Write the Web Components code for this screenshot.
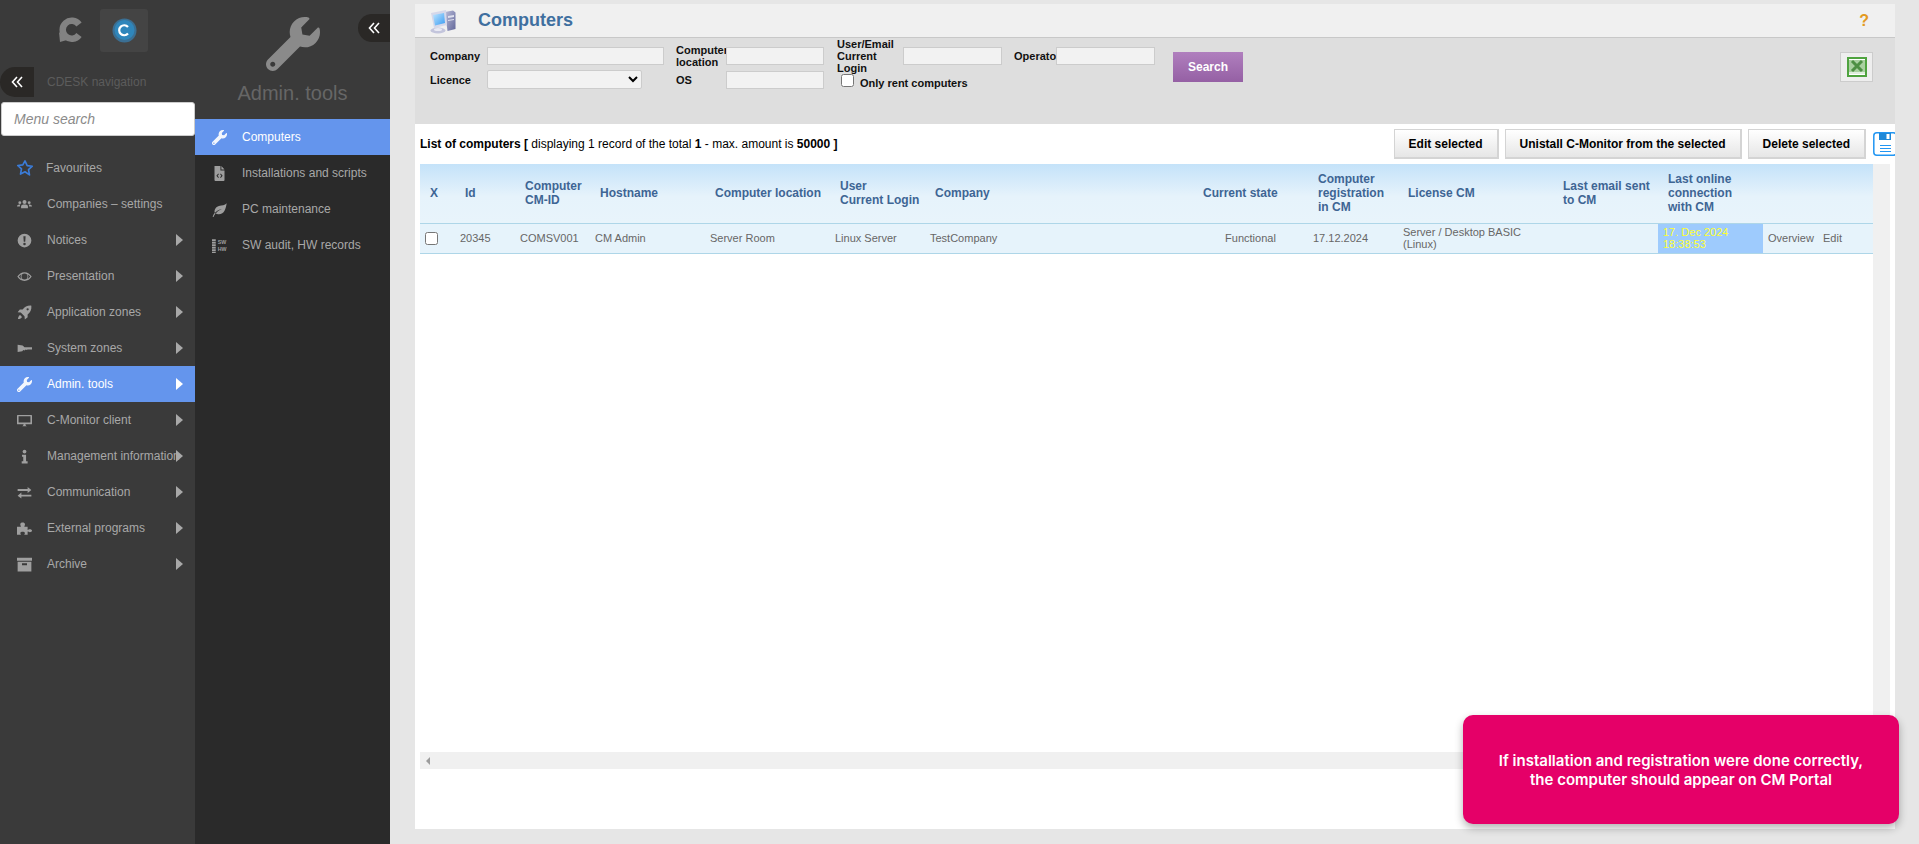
<!DOCTYPE html>
<html>
<head>
<meta charset="utf-8">
<title>Computers</title>
<style>
    html, body { margin: 0; height: 100%; overflow: hidden; background: #e6e6e6; }
    body { font-family: "Liberation Sans", Arial, sans-serif; }
</style>
</head>
<body>
<app-shell></app-shell>

<script>
const WRENCH = 'M507.73 109.1c-2.24-9.03-13.54-12.09-20.12-5.51l-74.36 74.36-67.88-11.31-11.31-67.88 74.36-74.36c6.62-6.62 3.43-17.9-5.66-20.16-47.38-11.74-99.55.91-136.58 37.93-39.64 39.64-50.55 97.1-34.05 147.2L18.74 402.76c-24.99 24.99-24.99 65.51 0 90.5 24.99 24.99 65.51 24.99 90.5 0l213.21-213.21c50.12 16.71 107.47 5.68 147.37-34.22 37.07-37.07 49.7-89.32 37.91-136.73zM64 472c-13.25 0-24-10.75-24-24 0-13.26 10.75-24 24-24s24 10.74 24 24c0 13.25-10.75 24-24 24z'

const ICONS = {
    star: '<path d="M12 2.5l2.9 6.3 6.8.8-5 4.7 1.3 6.8L12 17l-6 3.1 1.3-6.8-5-4.7 6.8-.8z" fill="none" stroke="#3b82e6" stroke-width="2.2" stroke-linejoin="round"/>',
    users: '<circle cx="12" cy="8" r="3.2"/><circle cx="4.5" cy="9" r="2.3"/><circle cx="19.5" cy="9" r="2.3"/><path d="M6.5 18v-3c0-2 2-3 5.5-3s5.5 1 5.500 3v3z"/><path d="M0 15c0-2 2-3.500 5.500-3-.6.8-.9 1.700-.9 3H0zM24 15c0-2-2-3.500-5.500-3 .6.8.9 1.700.9 3H24z"/>',
    notice: '<path fill-rule="evenodd" d="M12 1a11 11 0 1 0 0 22 11 11 0 0 0 0-22zM10.200 5h3.600l-.6 9h-2.400zM12 15.500a2 2 0 1 1 0 4 2 2 0 0 1 0-4z"/>',
    eye: '<path fill-rule="evenodd" d="M12 5C7 5 3 8 .5 12 3 16 7 19 12 19s9-3 11.500-7C21 8 17 5 12 5zm0 2.200a4.800 4.800 0 1 1 0 9.600 4.800 4.800 0 0 1 0-9.600zM2.800 12c1.300-1.800 2.900-3.200 4.800-4.200a6.500 6.500 0 0 0 0 8.400c-1.900-1-3.500-2.400-4.800-4.200zm18.400 0c-1.300 1.800-2.900 3.200-4.800 4.200a6.500 6.500 0 0 0 0-8.400c1.900 1 3.500 2.400 4.800 4.200z"/>',
    rocket: '<path d="M23 1c-6-.5-10.500 1.500-14 6H4.500L1 11.500l5 .5 6 6 .5 5 4.500-3.500V15c4.500-3.500 6.500-8 6-14zM17 5.200a1.800 1.800 0 1 1 0 3.600 1.800 1.800 0 0 1 0-3.600zM5 16c-2 .8-3 3-3.500 6.500C5 22 7.200 21 8 19z"/>',
    key: '<path d="M1 6l8 1 3 3h12v3.500h-7l-1.500 1-1.500-1-2 1.500-2-.5-1.500 2-7.500 1z"/>',
    desktop: '<path fill-rule="evenodd" d="M1 3h22a1 1 0 0 1 1 1v13a1 1 0 0 1-1 1H1a1 1 0 0 1-1-1V4a1 1 0 0 1 1-1zm1.500 2v10h19V5zM8 21c1.500-.4 2.500-1.200 2.500-3h3c0 1.800 1 2.600 2.500 3z"/>',
    info: '<circle cx="12" cy="4" r="3"/><path d="M8 9h6.500v10.500H17V23H7.500v-3.500H10V12.500H8z"/>',
    exchange: '<path d="M1 7.500h16V4l6 5-6 4.700V10.500H1zM23 16.500H7V13l-6 5 6 4.700V19.500h16z" transform="translate(0 -1)"/>',
    puzzle: '<path d="M0 9h6c1-.6-.8-1.500-.8-3.500C5.200 3.500 7 2.500 9 2.500s3.800 1 3.800 3c0 2-1.800 2.900-.8 3.500h5v5c.6 1 1.500-.8 3.500-.8 2 0 3.500 1 3.500 2.300s-1.500 2.300-3.500 2.300c-2 0-2.900-1.500-3.500-.8V22h-5c-1-.6.800-1.500.8-2.800 0-1.200-1.800-2.200-3.800-2.200s-3.800 1-3.800 2.200c0 1.300 1.800 2.200.8 2.800H0z"/>',
    archive: '<path fill-rule="evenodd" d="M0 1h24v5H0zM1 7.500h22V23H1zM8 10v3h8v-3z"/>',
    wrench: '<path transform="scale(.0469)" d="' + WRENCH + '"/>',
    filecode: '<path fill-rule="evenodd" d="M4 0h9.500v7H20v15.500a1.500 1.500 0 0 1-1.500 1.500h-13A1.500 1.500 0 0 1 4 22.500zM15 0l5 5.500h-5zM10 12l-3 3.500 3 3.500 1-1-2-2.500 2-2.500zM14 12l-1 1 2 2.500-2 2.500 1 1 3-3.500z"/>',
    leaf: '<path d="M23.500 2C22 11 20 20 10 19.500c-1.500 0-3-.5-4-1.300C9 14 13 12.500 16 11.500 12 12 7.500 13.500 4.500 17.500 3 13 6 8 11 6.500c5-1.500 9.500-1 12.500-4.500zM1 23.500c.8-2.500 2-4.500 3.500-6.200l1.200 1.100C4.200 20 3 22 2.500 24z"/>',
    audit: '<g><rect x="0" y="2" width="6" height="3"/><rect x="0" y="6" width="6" height="3"/><rect x="0" y="10" width="6" height="3"/><rect x="0" y="14" width="6" height="3"/><rect x="0" y="18" width="6" height="3"/><rect x="0" y="22" width="6" height="2"/><text x="9" y="10" font-size="8.500" font-weight="700" font-family="Liberation Sans, sans-serif">SW</text><text x="9" y="21" font-size="8.500" font-weight="700" font-family="Liberation Sans, sans-serif">HW</text></g>'
}

class NavItem extends HTMLElement {
    constructor() {
        super()
        const shadow = this.attachShadow({ mode: 'open' })
        shadow.innerHTML = `
      <style>
        :host {
          display: flex;
          align-items: center;
          position: relative;
          height: 36px;
          padding-left: var(--item-pad, 17px);
          color: #a8a8a8;
          font-size: 12px;
          white-space: nowrap;
        }
        :host([active]) { background: #6495ed; color: #fff; }
        svg { width: 15px; height: 15px; fill: currentColor; flex: none; opacity: .92; }
        :host([big]) svg { width: 18px; height: 18px; margin-left: -1px; }
        .label { margin-left: var(--label-gap, 15px); }
        :host([big]) .label { margin-left: 12px; }
        .arrow {
          display: none;
          position: absolute;
          right: 12px;
          top: 12px;
          border-left: 7px solid currentColor;
          border-top: 6px solid transparent;
          border-bottom: 6px solid transparent;
        }
        :host([arrow]) .arrow { display: block; }
      </style>
      <svg viewBox="0 0 24 24"></svg>
      <span class="label"><slot></slot></span>
      <span class="arrow"></span>
    `
    }

    connectedCallback() {
        this.shadowRoot.querySelector('svg').innerHTML = ICONS[this.getAttribute('icon')] || ''
    }
}

class CollapseTab extends HTMLElement {
    constructor() {
        super()
        const shadow = this.attachShadow({ mode: 'open' })
        shadow.innerHTML = `
      <style>
        :host {
          display: flex;
          align-items: center;
          justify-content: center;
          width: 34px;
          height: 30px;
          background: #2a2826;
          border-radius: 15px 0 0 15px;
        }
        svg { width: 12px; height: 12px; fill: none; stroke: #fff; stroke-width: 1.6; }
      </style>
      <svg viewBox="0 0 12 12"><path d="M6 1L1.500 6 6 11M11 1L6.500 6 11 11"/></svg>
    `
    }
}

class MainRail extends HTMLElement {
    constructor() {
        super()
        const shadow = this.attachShadow({ mode: 'open' })
        shadow.innerHTML = `
      <style>
        :host {
          display: block;
          width: 195px;
          flex: none;
          background: #3a3a3a;
        }
        .logos { display: flex; align-items: flex-start; height: 67px; padding: 9px 0 0 58px; box-sizing: border-box; }
        .logo-c { width: 25px; height: 26px; margin-top: 8px; }
        .tile {
          display: flex;
          align-items: center;
          justify-content: center;
          width: 48px;
          height: 43px;
          margin-left: 17px;
          background: #444;
          border-radius: 3px;
        }
        .tile svg { width: 25px; height: 25px; }
        .head { display: flex; align-items: center; height: 30px; }
        .head span { margin-left: 13px; font-size: 12px; color: #5c5c5c; }
        .search {
          box-sizing: border-box;
          height: 34px;
          margin: 5px 0 0 1px;
          padding-left: 12px;
          display: flex;
          align-items: center;
          background: #fff;
          border: 1px solid #ccc;
          border-radius: 3px;
          font-size: 14px;
          font-style: italic;
          color: #8b8b8b;
        }
        .list { margin-top: 14px; }
      </style>
      <div class="logos">
        <svg class="logo-c" viewBox="0 0 25 26">
          <path d="M21 7.500A9 9 0 1 0 21 18" fill="none" stroke="#828282" stroke-width="6.500"/>
          <path d="M1 15l1 10 7-2z" fill="#828282"/>
        </svg>
        <div class="tile">
          <svg viewBox="0 0 25 25">
            <circle cx="12.500" cy="12.500" r="12" fill="#3b6f93"/>
            <circle cx="12.500" cy="12" r="10" fill="#2f86bb"/>
            <path d="M16 9a5 5 0 1 0 0 6.500" fill="none" stroke="#fff" stroke-width="2.200"/>
          </svg>
        </div>
      </div>
      <div class="head"><collapse-tab></collapse-tab><span>CDESK navigation</span></div>
      <div class="search">Menu search</div>
      <div class="list"><slot></slot></div>
    `
    }
}

class SubRail extends HTMLElement {
    constructor() {
        super()
        const shadow = this.attachShadow({ mode: 'open' })
        shadow.innerHTML = `
      <style>
        :host {
          display: block;
          position: relative;
          width: 195px;
          flex: none;
          background: #2a2a2a;
          --item-pad: 17px;
          --label-gap: 15px;
        }
        .top {
          height: 119px;
          box-sizing: border-box;
          padding-top: 17px;
          background: #3a3a3a;
          text-align: center;
        }
        .top svg { display: block; width: 54px; height: 54px; margin: 0 auto 0 71px; fill: #8a8a8a; }
        .title { margin-top: 11px; padding-left: 0; font-size: 20px; line-height: 23px; color: #666; }
        collapse-tab { position: absolute; top: 14px; right: 0; width: 32px; height: 28px; }
      </style>
      <div class="top">
        <svg viewBox="0 0 512 512"><path d="${WRENCH}"/></svg>
        <div class="title"><slot name="title"></slot></div>
      </div>
      <collapse-tab></collapse-tab>
      <slot></slot>
    `
    }
}

class FilterBar extends HTMLElement {
    constructor() {
        super()
        const shadow = this.attachShadow({ mode: 'open' })
        shadow.innerHTML = `
      <style>
        :host {
          display: flex;
          align-items: flex-start;
          box-sizing: border-box;
          height: 86px;
          padding: 9px 22px 0 15px;
          background: #dedede;
          font-size: 11px;
          font-weight: bold;
          line-height: 12px;
          color: #111;
        }
        .grid {
          display: grid;
          grid-template-columns: 57px 177px 62px 98px 79px 99px 54px 99px;
          grid-template-rows: 18px 18px;
          row-gap: 6px;
          align-items: center;
        }
        .l2 { margin-left: 12px; }
        .l3 { margin-left: 13px; }
        .l4 { margin-left: 12px; }
        .c2 { grid-column: 3 / 4; }
        .l2 { width: 50px; }
        label { display: block; }
        input.text {
          box-sizing: border-box;
          width: 100%;
          height: 18px;
          margin: 0;
          background: #f2f2f2;
          border: 1px solid #ccc;
        }
        .c3 { margin-left: 12px; }
        select {
          box-sizing: border-box;
          width: 155px;
          height: 19px;
          margin: -1px 0 0;
          background: #f2f2f2;
          border: 1px solid #ccc;
          border-radius: 2px;
        }
        .rent { grid-column: 5 / 8; display: flex; align-items: center; margin-left: 13px; }
        .rent input { width: 13px; height: 13px; margin: 0 6px 0 4px; }
        .rent span { position: relative; top: 3px; }
        .rent span { transform: none; }
        .search {
          box-sizing: border-box;
          width: 70px;
          height: 30px;
          margin: 5px 0 0 18px;
          display: flex;
          align-items: center;
          justify-content: center;
          background: linear-gradient(#b07fbe, #9560a4);
          color: #fff;
          font-size: 12px;
        }
        .excel {
          box-sizing: border-box;
          width: 33px;
          height: 30px;
          margin: 5px 0 0 auto;
          display: flex;
          align-items: center;
          justify-content: center;
          background: #eee;
          border: 1px solid #ccc;
        }
        .excel svg { width: 20px; height: 20px; }
      </style>
      <div class="grid">
        <label>Company</label><input class="text">
        <label class="l2">Computer, location</label><input class="text">
        <label class="l3">User/Email Current Login</label><input class="text">
        <label class="l4">Operator</label><input class="text">
        <label>Licence</label><select><option></option></select>
        <label class="l2">OS</label><input class="text">
        <div class="rent"><input type="checkbox"><span>Only rent computers</span></div>
      </div>
      <div class="search">Search</div>
      <div class="excel">
        <svg viewBox="0 0 20 20">
          <rect x="1" y="1" width="18" height="18" fill="#fff" stroke="#4fa33f" stroke-width="2"/>
          <rect x="2" y="3" width="16" height="12" fill="#a9d0a0"/>
          <path d="M5 4l10 10M15 4L5 14" stroke="#4d8f43" stroke-width="3"/>
          <rect x="2" y="15" width="16" height="2" fill="#dfeedd"/>
        </svg>
      </div>
    `
    }
}

class ActionBar extends HTMLElement {
    constructor() {
        super()
        const shadow = this.attachShadow({ mode: 'open' })
        shadow.innerHTML = `
      <style>
        :host {
          display: flex;
          align-items: flex-start;
          box-sizing: border-box;
          height: 40px;
          padding: 5px 0 0 5px;
          background: #fff;
          color: #000;
          font-size: 12px;
        }
        .info { margin-top: 8px; line-height: 14px; flex: 1; white-space: nowrap; }
        .btn {
          box-sizing: border-box;
          height: 30px;
          margin-left: 6px;
          padding: 0 14px;
          display: flex;
          align-items: center;
          font-weight: bold;
          background: linear-gradient(#fff, #e6e6e6);
          border: 2px solid #d4d4d4;
          border-top-width: 1px;
          border-left-width: 1px;
        }
        svg { flex: none; width: 24px; height: 24px; margin: 3px -2px 0 7px; }
      </style>
      <div class="info"><b>List of computers [</b> displaying 1 record of the total <b>1</b> - max. amount is <b>50000 ]</b></div>
      <div class="btn">Edit selected</div>
      <div class="btn">Unistall C-Monitor from the selected</div>
      <div class="btn">Delete selected</div>
      <svg viewBox="0 0 24 24">
        <rect x=".8" y=".8" width="22.400" height="22.400" rx="3" fill="#fff" stroke="#2196f3" stroke-width="1.500"/>
        <rect x="6" y="1" width="12" height="7" fill="#1e88d8"/>
        <rect x="13.500" y="2" width="3" height="5" fill="#fff"/>
        <path d="M7 13.500h11M7 16.500h11M7 19.500h11" stroke="#2196f3" stroke-width="1.200"/>
      </svg>
    `
    }
}

class ComputerTable extends HTMLElement {
    constructor() {
        super()
        const shadow = this.attachShadow({ mode: 'open' })
        shadow.innerHTML = `
      <style>
        :host { display: block; flex: none; width: 1453px; }
        table { border-collapse: collapse; table-layout: fixed; width: 1453px; }
        th {
          height: 59px;
          padding: 0 0 0 10px;
          box-sizing: border-box;
          text-align: left;
          font-size: 12px;
          line-height: 14px;
          color: #3e6594;
          background: linear-gradient(#c4e2f9, #e6f3fb 55%, #e8f4fb);
          border-bottom: 1px solid #aed6e8;
        }
        td {
          height: 30px;
          padding: 0 0 0 5px;
          box-sizing: border-box;
          font-size: 11px;
          line-height: 12px;
          color: #666;
          background: #e6f3fb;
          border-bottom: 1px solid #aed6e8;
        }
        td.state { text-align: center; padding: 0; }
        td.online { background: #9ecbfd; color: #ffff33; }
        input { display: block; width: 13px; height: 13px; margin: 0; }
      </style>
      <table>
        <colgroup>
          <col style="width:35px"><col style="width:60px"><col style="width:75px"><col style="width:115px">
          <col style="width:125px"><col style="width:95px"><col style="width:268px"><col style="width:115px">
          <col style="width:90px"><col style="width:155px"><col style="width:105px"><col style="width:105px">
          <col style="width:55px"><col style="width:55px">
        </colgroup>
        <thead>
          <tr>
            <th>X</th><th>Id</th><th>Computer<br>CM-ID</th><th>Hostname</th><th>Computer location</th>
            <th>User<br>Current Login</th><th>Company</th><th>Current state</th>
            <th>Computer<br>registration<br>in CM</th><th>License CM</th><th>Last email sent<br>to CM</th>
            <th>Last online<br>connection<br>with CM</th><th></th><th></th>
          </tr>
        </thead>
        <tbody>
          <tr>
            <td><input type="checkbox"></td><td>20345</td><td>COMSV001</td><td>CM Admin</td><td>Server Room</td>
            <td>Linux Server</td><td>TestCompany</td><td class="state">Functional</td><td>17.12.2024</td>
            <td>Server / Desktop BASIC<br>(Linux)</td><td></td><td class="online">17. Dec 2024<br>18:38:53</td>
            <td>Overview</td><td>Edit</td>
          </tr>
        </tbody>
      </table>
    `
    }
}

class ToastNote extends HTMLElement {
    constructor() {
        super()
        const shadow = this.attachShadow({ mode: 'open' })
        shadow.innerHTML = `
      <style>
        :host {
          position: absolute;
          right: 20px;
          bottom: 20px;
          width: 436px;
          height: 109px;
          display: flex;
          align-items: center;
          justify-content: center;
          text-align: center;
          background: #e50068;
          color: #fff;
          border-radius: 10px;
          box-shadow: 0 4px 8px rgba(0,0,0,.3);
          font-family: Inter, "Liberation Sans", sans-serif;
          font-size: 15px;
          font-weight: 600;
          line-height: 19px;
        }
      </style>
      <div><slot></slot></div>
    `
    }
}

class ComputersPage extends HTMLElement {
    constructor() {
        super()
        const shadow = this.attachShadow({ mode: 'open' })
        shadow.innerHTML = `
      <style>
        :host {
          display: flex;
          flex-direction: column;
          width: 1480px;
          height: 825px;
          margin: 4px 24px 15px 25px;
          flex: none;
          background: #fff;
          overflow: hidden;
        }
        .head {
          box-sizing: border-box;
          display: flex;
          align-items: center;
          height: 34px;
          padding: 0 26px 0 15px;
          background: #f0f0f0;
          border-bottom: 1px solid #c8c8c8;
        }
        .head svg { width: 26px; height: 25px; margin-top: 1px; }
        h1 { flex: 1; margin: 0 0 0 22px; font-size: 18px; line-height: 21px; color: #3f6f9f; }
        .help { font-size: 16px; font-weight: bold; color: #e39a21; }
        .tablearea { display: flex; height: 588px; padding-left: 5px; }
        .vtrack { flex: none; width: 17px; background: #f0f0f0; }
        .htrack {
          display: flex;
          align-items: center;
          height: 17px;
          margin: 0 5px;
          padding-left: 6px;
          background: #f0f0f0;
        }
        .htrack i {
          border-right: 4px solid #9c9c9c;
          border-top: 4px solid transparent;
          border-bottom: 4px solid transparent;
        }
      </style>
      <div class="head">
        <svg viewBox="0 0 26 25">
          <defs>
            <linearGradient id="scr" x1="0" y1="0" x2="1" y2="1"><stop offset="0" stop-color="#bfe6ff"/><stop offset="1" stop-color="#3a9cf2"/></linearGradient>
            <linearGradient id="tow" x1="0" y1="0" x2="1" y2="1"><stop offset="0" stop-color="#b9bcd9"/><stop offset="1" stop-color="#62679a"/></linearGradient>
          </defs>
          <path d="M15 3l8-1.500 2.500 2V20l-8 2z" fill="url(#tow)"/>
          <path d="M18 7l6-1v2l-6 1zM18 11l6-1v1l-6 1z" fill="#dfe1ef"/>
          <path d="M1 4l15-3 1 15-13 3z" fill="#d5d8ea"/>
          <path d="M3 6l11-2 1 10-10 2.500z" fill="url(#scr)"/>
          <ellipse cx="8" cy="21.500" rx="7.500" ry="3" fill="#c3c5dc"/>
          <ellipse cx="8" cy="20.500" rx="4" ry="1.500" fill="#e9eaf4"/>
        </svg>
        <h1>Computers</h1>
        <span class="help">?</span>
      </div>
      <filter-bar></filter-bar>
      <action-bar></action-bar>
      <div class="tablearea">
        <computer-table></computer-table>
        <div class="vtrack"></div>
      </div>
      <div class="htrack"><i></i></div>
    `
    }
}

class AppShell extends HTMLElement {
    constructor() {
        super()
        const shadow = this.attachShadow({ mode: 'open' })
        shadow.innerHTML = `
      <style>
        :host {
          display: flex;
          position: relative;
          width: 1919px;
          height: 844px;
          overflow: hidden;
        }
      </style>
      <main-rail>
        <nav-item icon="star" big>Favourites</nav-item>
        <nav-item icon="users">Companies – settings</nav-item>
        <nav-item icon="notice" arrow>Notices</nav-item>
        <nav-item icon="eye" arrow>Presentation</nav-item>
        <nav-item icon="rocket" arrow>Application zones</nav-item>
        <nav-item icon="key" arrow>System zones</nav-item>
        <nav-item icon="wrench" arrow active>Admin. tools</nav-item>
        <nav-item icon="desktop" arrow>C-Monitor client</nav-item>
        <nav-item icon="info" arrow>Management information</nav-item>
        <nav-item icon="exchange" arrow>Communication</nav-item>
        <nav-item icon="puzzle" arrow>External programs</nav-item>
        <nav-item icon="archive" arrow>Archive</nav-item>
      </main-rail>
      <sub-rail>
        <span slot="title">Admin. tools</span>
        <nav-item icon="wrench" active>Computers</nav-item>
        <nav-item icon="filecode">Installations and scripts</nav-item>
        <nav-item icon="leaf">PC maintenance</nav-item>
        <nav-item icon="audit">SW audit, HW records</nav-item>
      </sub-rail>
      <computers-page></computers-page>
      <toast-note>If installation and registration were done correctly,<br>the computer should appear on CM Portal</toast-note>
    `
    }
}

customElements.define('nav-item', NavItem)
customElements.define('collapse-tab', CollapseTab)
customElements.define('main-rail', MainRail)
customElements.define('sub-rail', SubRail)
customElements.define('filter-bar', FilterBar)
customElements.define('action-bar', ActionBar)
customElements.define('computer-table', ComputerTable)
customElements.define('toast-note', ToastNote)
customElements.define('computers-page', ComputersPage)
customElements.define('app-shell', AppShell)
</script>
</body>
</html>
